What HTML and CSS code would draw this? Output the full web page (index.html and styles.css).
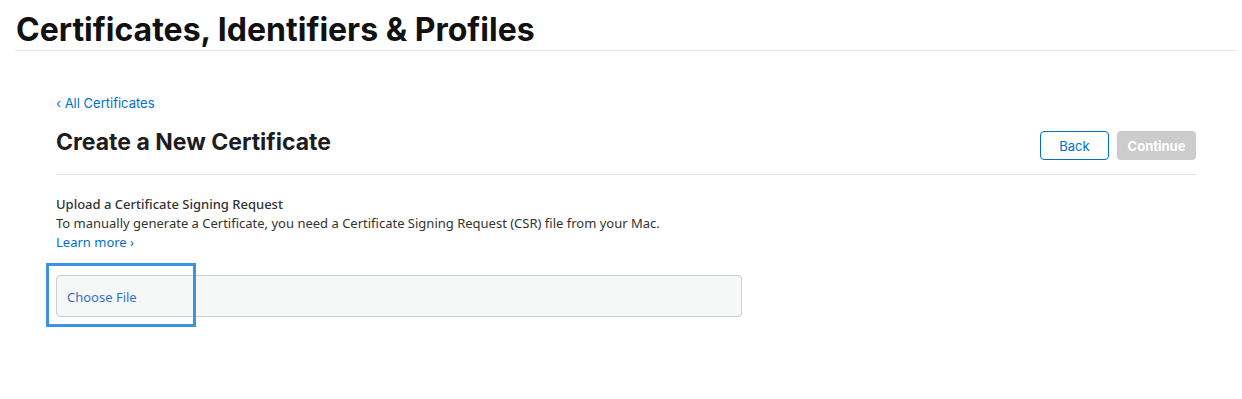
FILE: index.html
```html
<!DOCTYPE html>
<html>
<head>
    <title>Create a New Certificate</title>
    <link rel="stylesheet" href="styles.css">
</head>
<body>
    <header class="page-header">
        <h1>Certificates, Identifiers &amp; Profiles</h1>
    </header>

    <main class="content">
        <a class="back-link" href="#">&lsaquo; All Certificates</a>
        <div class="title-row">
            <h2>Create a New Certificate</h2>
            <div class="actions">
                <button class="btn btn-back">Back</button>
                <button class="btn btn-continue" disabled>Continue</button>
            </div>
        </div>

        <section class="upload">
            <h3>Upload a Certificate Signing Request</h3>
            <p>To manually generate a Certificate, you need a Certificate Signing Request (CSR) file from your Mac.</p>
            <a class="learn-more" href="#">Learn more &rsaquo;</a>

            <div class="file-field">
                <div class="file-box">
                    <span class="choose-file">Choose File</span>
                </div>
                <div class="highlight"></div>
            </div>
        </section>
    </main>
</body>
</html>
```

FILE: styles.css
```css
body {
    margin: 0;
    background-color: #fff;
    font-family: Inter, "Noto Sans", sans-serif;
    color: #1d1d1f;
}

.page-header {
    margin: 0 6px 0 15px;
    border-bottom: 1px solid #e5e5e5;
    height: 50px;
}

.page-header h1 {
    margin: 0;
    padding-top: 10px;
    padding-left: 1px;
    font-size: 32px;
    font-weight: 700;
    line-height: 40px;
    color: #111;
}

.content {
    width: 1140px;
    margin: 0 0 0 56px;
    padding: 43px 0 60px;
}

.back-link {
    display: block;
    font-size: 13px;
    line-height: 18px;
    color: #0070c9;
    text-decoration: none;
}

.title-row {
    display: flex;
    justify-content: space-between;
    align-items: flex-start;
    padding-top: 15px;
    height: 47px;
    border-bottom: 1px solid #e0e0e0;
}

.title-row h2 {
    margin: 0;
    font-size: 23px;
    font-weight: 700;
    line-height: 30px;
    color: #1d1d1f;
}

.actions {
    display: flex;
    gap: 8px;
    padding-top: 4px;
}

.btn {
    font-family: Inter, "Noto Sans", sans-serif;
    font-size: 13px;
    height: 29px;
    border-radius: 4px;
    padding: 0;
}

.btn-back {
    width: 69px;
    background-color: #fff;
    border: 1px solid #0070c9;
    color: #0070c9;
}

.btn-continue {
    width: 79px;
    background-color: #ccc;
    border: none;
    color: #fff;
    font-weight: 700;
}

.upload {
    padding-top: 20px;
    font-family: "Noto Sans", Roboto, sans-serif;
}

.upload h3 {
    margin: 0;
    font-size: 13px;
    font-weight: 500;
    line-height: 19px;
    color: #333;
}

.upload p {
    margin: 0;
    font-size: 13px;
    line-height: 19px;
    color: #333;
}

.learn-more {
    display: block;
    font-size: 13px;
    line-height: 18px;
    color: #0070c9;
    text-decoration: none;
}

.file-field {
    position: relative;
    margin-top: 24px;
    width: 686px;
}

.file-box {
    height: 40px;
    background-color: #f6f7f7;
    border: 1px solid #cfcfcf;
    border-radius: 4px;
    line-height: 40px;
}

.choose-file {
    padding-left: 10px;
    font-size: 13px;
    color: #2f73c6;
}

.highlight {
    position: absolute;
    left: -10px;
    top: -12px;
    width: 144px;
    height: 58px;
    border: 3px solid #3a94e0;
}
```
